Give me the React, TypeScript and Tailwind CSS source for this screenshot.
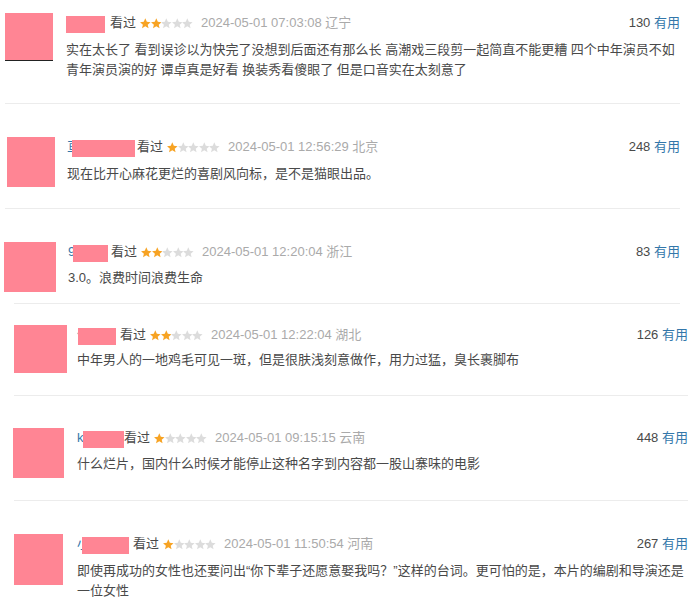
import React from "react";

type Block = {
  ml: number;
  width: number;
  pt: number;
  h: number;
  avW: number;
  avH: number;
  avBorder?: boolean;
  gap: number;
  ch: string;
  pinkL: number;
  pinkW: number;
  nameW: number;
  stars: number;
  date: string;
  loc: string;
  count: number;
  textGap: number;
  lines: string[];
  divider?: { ml: number; w: number };
};

const blocks: Block[] = [
  {
    ml: 5, width: 675, pt: 13, h: 103, avW: 48, avH: 48, avBorder: true, gap: 13,
    ch: "", pinkL: 0, pinkW: 39, nameW: 44, stars: 2,
    date: "2024-05-01 07:03:08", loc: "辽宁", count: 130, textGap: 7,
    lines: [
      "实在太长了 看到误诊以为快完了没想到后面还有那么长 高潮戏三段剪一起简直不能更糟 四个中年演员不如",
      "青年演员演的好 谭卓真是好看 换装秀看傻眼了 但是口音实在太刻意了",
    ],
    divider: { ml: 5, w: 675 },
  },
  {
    ml: 7, width: 673, pt: 33, h: 104, avW: 48, avH: 50, gap: 12,
    ch: "亘", pinkL: 5, pinkW: 63, nameW: 70, stars: 1,
    date: "2024-05-01 12:56:29", loc: "北京", count: 248, textGap: 7,
    lines: ["现在比开心麻花更烂的喜剧风向标，是不是猫眼出品。"],
    divider: { ml: 5, w: 675 },
  },
  {
    ml: 4, width: 676, pt: 33, h: 94, avW: 52, avH: 50, gap: 12,
    ch: "9", pinkL: 5, pinkW: 35, nameW: 43, stars: 2,
    date: "2024-05-01 12:20:04", loc: "浙江", count: 83, textGap: 6,
    lines: ["3.0。浪费时间浪费生命"],
    divider: { ml: 14, w: 666 },
  },
  {
    ml: 14, width: 674, pt: 21, h: 91, avW: 53, avH: 48, gap: 10,
    ch: "仔", pinkL: 1, pinkW: 38, nameW: 43, stars: 2,
    date: "2024-05-01 12:22:04", loc: "湖北", count: 126, textGap: 5,
    lines: ["中年男人的一地鸡毛可见一斑，但是很肤浅刻意做作，用力过猛，臭长裹脚布"],
    divider: { ml: 14, w: 674 },
  },
  {
    ml: 13, width: 675, pt: 32, h: 104, avW: 51, avH: 50, gap: 13,
    ch: "k", pinkL: 6, pinkW: 41, nameW: 47, stars: 1,
    date: "2024-05-01 09:15:15", loc: "云南", count: 448, textGap: 6,
    lines: ["什么烂片，国内什么时候才能停止这种名字到内容都一股山寨味的电影"],
    divider: { ml: 14, w: 674 },
  },
  {
    ml: 14, width: 674, pt: 33, h: 107, avW: 49, avH: 51, gap: 14,
    ch: "小", pinkL: 5, pinkW: 47, nameW: 56, stars: 1,
    date: "2024-05-01 11:50:54", loc: "河南", count: 267, textGap: 7,
    lines: [
      "即使再成功的女性也还要问出“你下辈子还愿意娶我吗？”这样的台词。更可怕的是，本片的编剧和导演还是",
      "一位女性",
    ],
  },
];

function Star({ on }: { on: boolean }) {
  return (
    <svg width="10.6" height="11" viewBox="1.2 1.2 21.6 21.6" className="block">
      <path
        d="M12 1.5l3.1 7.1 7.6.7-5.8 5 1.8 7.5L12 17.8 5.3 21.8l1.8-7.5-5.8-5 7.6-.7z"
        fill={on ? "#f7a323" : "#dcdcdc"}
      />
    </svg>
  );
}

function Row({ b }: { b: Block }) {
  return (
    <>
      <div className="flex" style={{ height: b.h, paddingTop: b.pt, marginLeft: b.ml, width: b.width }}>
        <div
          className={"shrink-0 bg-[#ff8594] " + (b.avBorder ? "border-b border-[#222]" : "")}
          style={{ width: b.avW, height: b.avH }}
        />
        <div className="flex-1 min-w-0" style={{ marginLeft: b.gap }}>
          <div className="flex items-center justify-between h-5 text-[13px] leading-5">
            <div className="flex items-center whitespace-nowrap">
              <span className="relative inline-block h-5" style={{ width: b.nameW }}>
                <span className="absolute left-0 top-0 text-[#3377aa]">{b.ch}</span>
                <span
                  className="absolute top-[3px] h-[17px] bg-[#ff8594]"
                  style={{ left: b.pinkL, width: b.pinkW }}
                />
              </span>
              <span className="text-[#494949]">看过</span>
              <span className="ml-[4px] flex">
                {[0, 1, 2, 3, 4].map((i) => (
                  <Star key={i} on={i < b.stars} />
                ))}
              </span>
              <span className="ml-[8px] text-[#aaaaaa]">
                {b.date} {b.loc}
              </span>
            </div>
            <div className="whitespace-nowrap">
              <span className="text-[#494949]">{b.count}</span>{" "}
              <span className="text-[#3377aa]">有用</span>
            </div>
          </div>
          <div className="text-[13px] leading-5 text-[#494949] whitespace-nowrap" style={{ marginTop: b.textGap }}>
            {b.lines.map((l, i) => (
              <div key={i}>{l}</div>
            ))}
          </div>
        </div>
      </div>
      {b.divider && (
        <div className="h-px bg-[#ececec]" style={{ marginLeft: b.divider.ml, width: b.divider.w }} />
      )}
    </>
  );
}

export default function App() {
  return (
    <div
      className="w-[696px] h-[608px] overflow-hidden bg-white"
      style={{ fontFamily: '"Liberation Sans", "Noto Sans CJK SC", sans-serif' }}
    >
      {blocks.map((b, i) => (
        <Row key={i} b={b} />
      ))}
    </div>
  );
}
